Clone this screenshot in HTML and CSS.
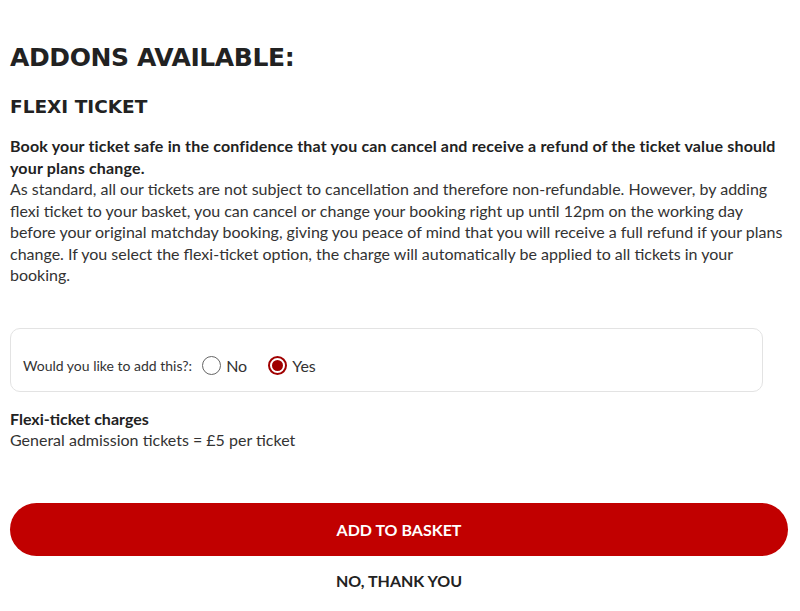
FILE: index.html
```html
<!DOCTYPE html>
<html lang="en">
<head>
  <meta charset="UTF-8">
  <meta name="viewport" content="width=device-width, initial-scale=1.0">
  <title>Addons</title>
  <link rel="stylesheet" href="styles.css">
</head>
<body>
  <div class="addons">
    <h1>ADDONS AVAILABLE:</h1>

    <h2>FLEXI TICKET</h2>
    <p class="intro">
      <strong>Book your ticket safe in the confidence that you can cancel and receive a refund of the ticket value should your plans change.</strong><br>
      As standard, all our tickets are not subject to cancellation and therefore non-refundable. However, by adding flexi ticket to your basket, you can cancel or change your booking right up until 12pm on the working day before your original matchday booking, giving you peace of mind that you will receive a full refund if your plans change. If you select the flexi-ticket option, the charge will automatically be applied to all tickets in your booking.
    </p>

    <div class="choice">
      <span class="choice-label">Would you like to add this?:</span>
      <label class="radio">
        <input type="radio" name="flexi" value="no">
        <span class="dot"></span>
        No
      </label>
      <label class="radio">
        <input type="radio" name="flexi" value="yes" checked>
        <span class="dot"></span>
        Yes
      </label>
    </div>

    <div class="charges">
      <strong>Flexi-ticket charges</strong><br>
      General admission tickets = £5 per ticket
    </div>

    <div class="actions">
      <button class="btn-primary">ADD TO BASKET</button>
      <button class="btn-link">NO, THANK YOU</button>
    </div>
  </div>
</body>
</html>
```

FILE: styles.css
```css
body {
  margin: 0;
  background: #ffffff;
  color: #222222;
  font-family: 'Lato', 'Open Sans', sans-serif;
}
.addons {
  padding: 38px 12px 10px 10px;
}
h1 {
  font-family: 'DejaVu Sans', sans-serif;
  font-size: 25px;
  font-weight: 700;
  letter-spacing: -0.4px;
  color: #222222;
  margin: 0 0 16px;
  line-height: 40px;
}
h2 {
  font-family: 'DejaVu Sans', sans-serif;
  font-size: 18.5px;
  font-weight: 700;
  color: #222222;
  margin: 0 0 15px;
  line-height: 26px;
}
.intro {
  font-size: 16px;
  line-height: 21.5px;
  margin: 0 0 42px;
  color: #333333;
}
.intro strong {
  color: #222222;
  letter-spacing: 0.17px;
}
.choice {
  display: flex;
  align-items: center;
  margin-right: 25px;
  height: 64px;
  padding: 12px 12px 0;
  border: 1px solid #e3e3e3;
  border-radius: 10px;
  box-sizing: border-box;
  font-size: 16px;
  color: #333333;
}
.choice-label {
  font-size: 14px;
  margin-right: 10px;
}
.radio {
  display: flex;
  align-items: center;
  gap: 5px;
  margin-right: 21px;
}
.radio input {
  display: none;
}
.dot {
  width: 19px;
  height: 19px;
  border: 1px solid #666666;
  border-radius: 50%;
  display: inline-block;
  box-sizing: border-box;
  position: relative;
}
.radio input:checked + .dot {
  border: 2px solid #a00000;
}
.radio input:checked + .dot::after {
  content: "";
  position: absolute;
  top: 2px;
  left: 2px;
  right: 2px;
  bottom: 2px;
  border-radius: 50%;
  background: #a00000;
}
.charges {
  margin-top: 16px;
  font-size: 16px;
  line-height: 21.5px;
  color: #333333;
}
.charges strong {
  color: #222222;
}
.actions {
  margin-top: 52px;
  display: flex;
  flex-direction: column;
  align-items: center;
}
.btn-primary {
  width: 100%;
  height: 53px;
  border: none;
  border-radius: 27px;
  background: #c10000;
  color: #ffffff;
  font-family: 'Lato', sans-serif;
  font-weight: 700;
  font-size: 16px;
  cursor: pointer;
}
.btn-link {
  margin-top: 8px;
  height: 34px;
  border: none;
  background: none;
  color: #222222;
  font-family: 'Lato', sans-serif;
  font-weight: 700;
  font-size: 16px;
  cursor: pointer;
}
```
